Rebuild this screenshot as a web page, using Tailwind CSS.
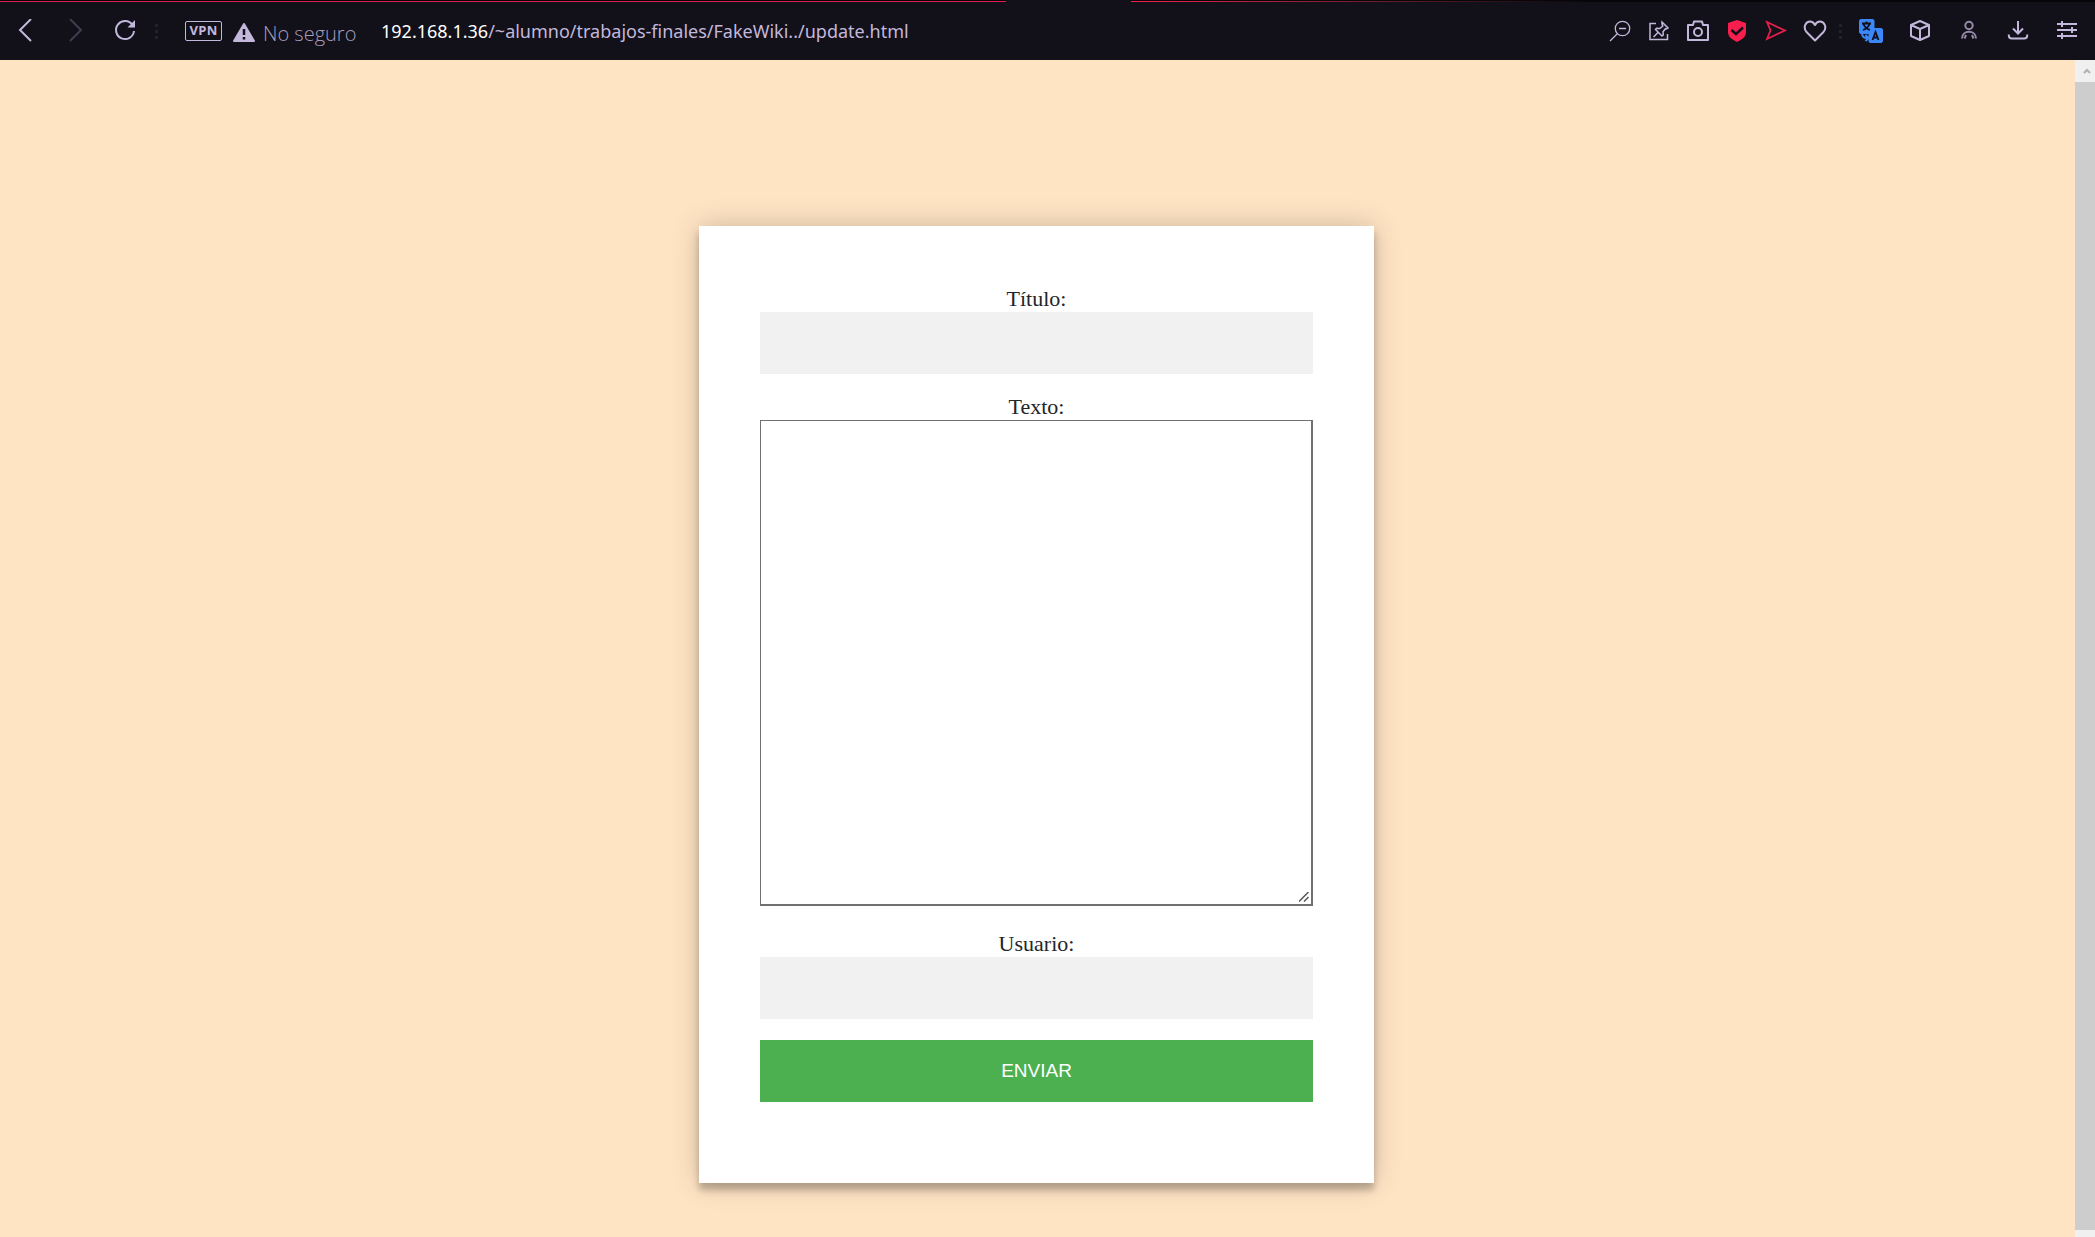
<!DOCTYPE html>
<html lang="es">
<head>
<meta charset="utf-8">
<title>update.html</title>
<script src="https://cdn.jsdelivr.net/npm/@tailwindcss/browser@4"></script>
</head>
<body class="flex min-h-screen flex-col bg-[#ffe4c4]">
  <header class="bg-[#121019] text-[#c3b8dc]">
    <!-- Tab strip edge -->
    <div class="flex h-[2px] bg-[#07060a]">
      <div class="mt-px w-[48%] border-r border-[#fa1e4e] bg-[#e01d4c]"></div>
      <div class="-mt-px w-[6%] bg-[#121019]"></div>
      <div class="mt-px w-[22%] bg-linear-to-r from-[#fa1e4e] to-[#07060a]"></div>
    </div>
    <div class="flex h-[58px] items-center pr-1">
      <nav class="flex items-center" aria-label="Navegación">
        <button aria-label="Atrás" class="flex w-[50px] justify-center"><svg class="size-6" viewBox="0 0 24 24" fill="none" stroke="currentColor" stroke-width="2"><path d="M18 0 7 11l11 11"/></svg></button>
        <button aria-label="Adelante" class="flex w-[50px] justify-center text-[#423d4f]"><svg class="size-6" viewBox="0 0 24 24" fill="none" stroke="currentColor" stroke-width="2"><path d="m7 0 11 11L7 22"/></svg></button>
        <button aria-label="Recargar" class="flex w-[50px] justify-center"><svg class="size-6" viewBox="0 0 24 24" fill="none" stroke="currentColor" stroke-width="2"><path d="M19.500 6A9 9 0 1 0 21 12"/><path d="M22 1v7.500h-7.500z" fill="currentColor" stroke="none"/></svg></button>
      </nav>
      <div class="flex w-3 flex-col items-center gap-[3px]"><i class="size-[3px] bg-[#24202f]"></i><i class="size-[3px] bg-[#24202f]"></i><i class="size-[3px] bg-[#24202f]"></i></div>
      <button class="ml-[23px] flex h-5 w-[37px] items-center justify-center rounded-[2px] border border-[#c3b8dc] font-['Open_Sans',sans-serif] text-[13px] font-bold tracking-wide">VPN</button>
      <svg class="mt-1 ml-[10px] h-5 w-6" viewBox="0 0 24 20"><path d="M12 1 22 18H2z" fill="currentColor" stroke="currentColor" stroke-width="2" stroke-linejoin="round"/><path d="M12 6v6M12 14v2.500" stroke="#121019" stroke-width="2.500"/></svg>
      <span class="mt-[5px] ml-[7px] w-[98px] font-['Open_Sans',sans-serif] text-[20px] leading-7 font-light whitespace-nowrap text-[#a79dbd]">No seguro</span>
      <p class="ml-5 min-w-0 flex-1 truncate font-['Noto_Sans',sans-serif] text-[18px] leading-7"><span class="text-white">192.168.1.36</span>/~alumno/trabajos-finales/FakeWiki../update.html</p>
      <div class="flex items-center">
        <button aria-label="Zoom" class="flex w-[39px] justify-center"><svg class="size-6" viewBox="0 0 24 24" fill="none" stroke="currentColor" stroke-width="1.300"><circle cx="14.500" cy="9.500" r="7.200"/><path d="M9.500 14.500 2 22M11 9.500h7"/></svg></button>
        <button aria-label="Fijar" class="flex w-[39px] justify-center"><svg class="size-6" viewBox="0 0 24 24" fill="none" stroke="currentColor" stroke-width="1.500"><path d="M9 4.500H3v16h17.500V15"/><path d="m15 3 6 6-1.500 1-1-.3-2.500 3 .3 3.300-1.300 1-6.500-6.500 1-1.300 3.300.3 3-2.500-.8-2zM11 13.500 6.500 18"/></svg></button>
        <button aria-label="Captura" class="flex w-[39px] justify-center"><svg class="size-6" viewBox="0 0 24 24" fill="none" stroke="currentColor" stroke-width="2" stroke-linejoin="round"><path d="M2 6h5l1-3.500h8L17 6h5v15H2z"/><circle cx="12" cy="13" r="4"/></svg></button>
        <button aria-label="Bloqueador" class="flex w-[39px] justify-center"><svg class="size-6" viewBox="0 0 24 24"><path d="m12 1 9 3v9c0 5-4 7.500-9 10-5-2.500-9-5-9-10V4z" fill="#fa1e4e"/><path d="m6.500 11 4.500 4 7-6.500" fill="none" stroke="#121019" stroke-width="2.500"/></svg></button>
        <button aria-label="Mi Flow" class="flex w-[39px] justify-center"><svg class="size-6" viewBox="0 0 24 24" fill="none" stroke="#e51f4c" stroke-width="1.800"><path d="m3 3 18 8.500L3 20l3.500-8.500z"/></svg></button>
        <button aria-label="Favoritos" class="flex w-[39px] justify-center"><svg class="size-6" viewBox="0 0 24 24" fill="none" stroke="currentColor" stroke-width="2" stroke-linejoin="round"><path d="M12 21.500 3.500 13C-.5 8 3 2.500 7 2.500c2.500 0 4 1.500 5 3.500 1-2 2.500-3.500 5-3.500 4 0 7.500 5.500 3.500 10.500z"/></svg></button>
        <div class="flex w-3 flex-col items-center gap-[3px]"><i class="size-[3px] bg-[#24202f]"></i><i class="size-[3px] bg-[#24202f]"></i><i class="size-[3px] bg-[#24202f]"></i></div>
        <button aria-label="Traducir" class="flex w-[49px] justify-center"><svg class="size-6" viewBox="0 0 24 24" fill="none"><path d="M1.500 0H14l1.500 1.500V9h7L24 10.500v12L22.500 24H11l-1.500-1.500V15h-8L0 13.500v-12z" fill="#3b87f7"/><path d="M3 4.500h9M7.500 2.500v2M4.500 5c1 3 3.500 5 6.500 6M10.500 5c-1 3-3.500 5-6.500 6M13.500 21l3-8 3 8M14.500 18.500h4" stroke="#121019" stroke-width="1.800"/><path d="M3 15c.5 3 2 4 5 4M6.500 16 9.500 19l-3 3" stroke="#3b87f7" stroke-width="2"/></svg></button>
        <button aria-label="Extensiones" class="flex w-[49px] justify-center"><svg class="size-6" viewBox="0 0 24 24" fill="none" stroke="currentColor" stroke-width="2" stroke-linejoin="round"><path d="m12 2 9 4v11l-9 4-9-4V6zM3 6l9 4 9-4M12 10v11"/></svg></button>
        <button aria-label="Perfil" class="flex w-[49px] justify-center text-[#958ba9]"><svg class="size-6" viewBox="0 0 24 24" fill="none" stroke="currentColor" stroke-width="2"><circle cx="12" cy="6.500" r="3.700"/><path d="M5 19.500c0-9 14-9 14 0M7.500 19.500 9 16M16.500 19.500 15 16"/></svg></button>
        <button aria-label="Descargas" class="flex w-[49px] justify-center"><svg class="size-6" viewBox="0 0 24 24" fill="none" stroke="currentColor" stroke-width="2"><path d="M12 2v12M7 9.500l5 5 5-5M2.800 15.500v1c0 2 1 3 3 3h12.400c2 0 3-1 3-3v-1"/></svg></button>
        <button aria-label="Configuración rápida" class="flex w-[49px] justify-center"><svg class="size-6" viewBox="0 0 24 24" fill="none" stroke="currentColor" stroke-width="2"><path d="M2 5h20M2 11h20M2 17h20M7 2v6M17 8v6M7 14v6"/></svg></button>
      </div>
    </div>
  </header>

  <div class="flex flex-1">
    <main class="flex flex-1 items-start justify-center pt-[166px] pr-[18px] pb-[54px] pl-4">
      <form class="flex w-full max-w-[675px] flex-col bg-white px-[61px] pt-[61px] pb-[81px] text-center font-['Liberation_Serif',serif] text-[22px] leading-[23px] text-[#212529] shadow-[0_0_27px_0_rgba(0,0,0,0.2),0_7px_7px_0_rgba(0,0,0,0.24)]">
        <label for="titulo" class="pb-[2px]">Título:</label>
        <input id="titulo" type="text" class="mb-[21px] h-[62px] w-full bg-[#f1f1f1] px-5 outline-none">
        <label for="texto" class="pb-[2px]">Texto:</label>
        <div class="relative mb-[26px] flex">
          <textarea id="texto" class="h-[486px] w-full resize-none border border-r-2 border-b-2 border-[#707070] bg-white p-1"></textarea>
          <svg class="pointer-events-none absolute right-1 bottom-1 size-[10px]" viewBox="0 0 10 10" fill="none" stroke="#555" stroke-width="1.500"><path d="M0 9.500 9.500 0M5 9.500 9.500 5"/></svg>
        </div>
        <label for="usuario" class="pb-[2px]">Usuario:</label>
        <input id="usuario" type="text" class="mb-[21px] h-[62px] w-full bg-[#f1f1f1] px-5 outline-none">
        <button type="submit" class="h-[62px] w-full bg-[#4caf50] pb-[2px] font-['Liberation_Sans',sans-serif] text-[19px] text-white">ENVIAR</button>
      </form>
    </main>
    <!-- Scroll bar -->
    <div class="flex w-5 flex-col bg-[#f0f0f0] pb-[7px]" aria-hidden="true">
      <div class="flex h-[22px] items-center justify-end pr-1"><svg class="size-2" viewBox="0 0 8 8" fill="none" stroke="#b0b0b0" stroke-width="2"><path d="m1 6 3-3 3 3"/></svg></div>
      <div class="flex-1 bg-[#cdcdcd]"></div>
    </div>
  </div>
</body>
</html>
